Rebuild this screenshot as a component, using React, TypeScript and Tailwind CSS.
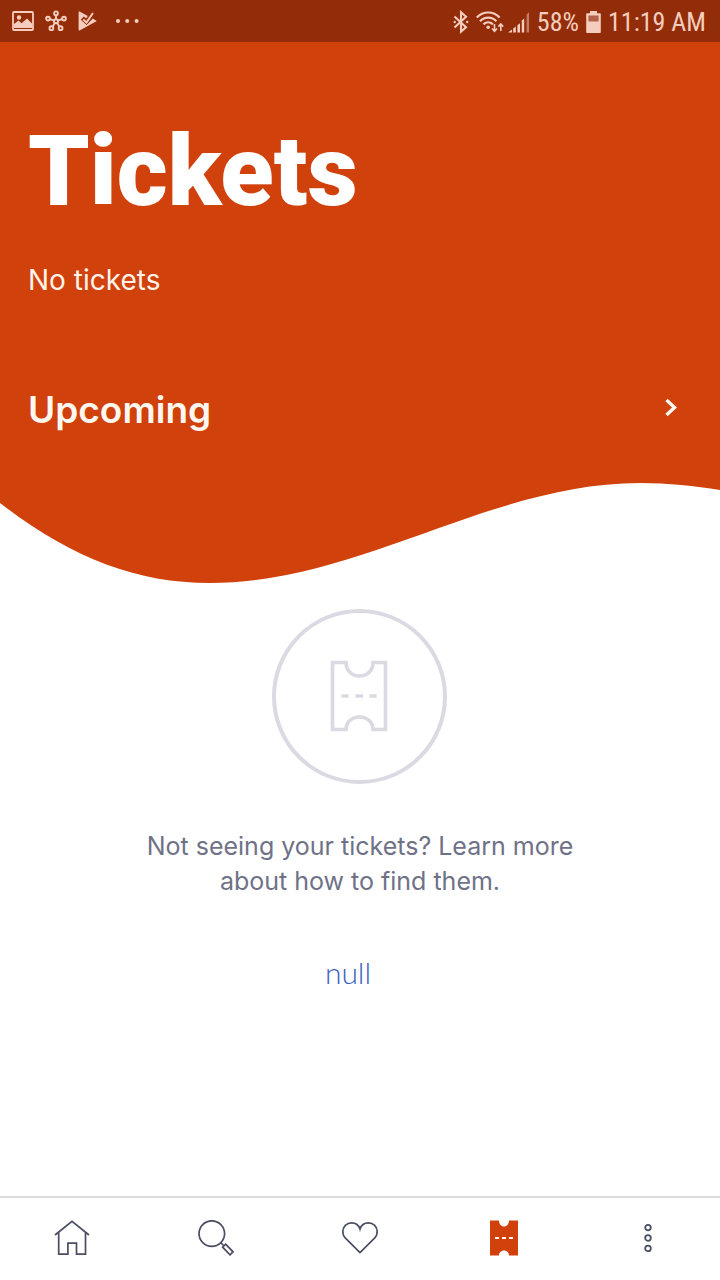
import React from "react";

function PictureIcon() {
  return (
    <svg className="h-5 w-[22px]" viewBox="0 0 22 20" fill="none">
      <rect x="1" y="1" width="20" height="18" rx="1" stroke="currentColor" strokeWidth="1.8" />
      <circle cx="7" cy="6.5" r="2.2" fill="currentColor" />
      <path d="M2 17V13l4.500-3.500 3 2.800 5.500-4.800 5 5V17z" fill="currentColor" />
    </svg>
  );
}

function HubIcon() {
  return (
    <svg className="size-[22px]" viewBox="0 0 22 22" fill="none" stroke="currentColor" strokeWidth="1.9">
      <circle cx="11" cy="11.2" r="2" />
      <path d="M11 5.4v3.8M5.2 9.2l3.9 1.4M16.8 9.2l-3.9 1.4M7.9 16.2l1.9-3.3M14.1 16.2l-1.9-3.3" />
      <circle cx="11" cy="3.3" r="1.9" />
      <circle cx="3" cy="8.6" r="1.9" />
      <circle cx="19" cy="8.6" r="1.9" />
      <circle cx="6.4" cy="18.2" r="1.9" />
      <circle cx="15.6" cy="18.2" r="1.9" />
    </svg>
  );
}

function PlayCheckIcon() {
  return (
    <svg className="h-5 w-[19px]" viewBox="0 0 19 20" fill="none">
      <path d="M.6 1.200C.6.500 1 .300 1.600.600L9.800 5 8.200 7.600 5.800 5.400 2.800 8.800 8.600 14 14.800 7.600 18 9.400C18.500 9.700 18.500 10.300 18 10.600L1.600 19.400C1 19.700.6 19.400.6 18.800z" fill="currentColor" />
      <path d="M5.200 8.400 8.500 11.400 15 2" stroke="currentColor" strokeWidth="2" />
    </svg>
  );
}

function DotsIcon() {
  return (
    <svg className="h-1 w-[23px]" viewBox="0 0 23 4" fill="currentColor">
      <circle cx="2" cy="2" r="2" />
      <circle cx="11.2" cy="2" r="2" />
      <circle cx="20.6" cy="2" r="2" />
    </svg>
  );
}

function BluetoothIcon() {
  return (
    <svg className="h-6 w-4" viewBox="0 0 16 24" fill="none" stroke="currentColor" strokeWidth="2.1">
      <path d="M1.500 6.600 13 17.200 8 21.600V2.200L13 6.800 1.500 17.400" />
      <circle cx="1.700" cy="12" r="1.200" fill="currentColor" stroke="none" />
      <circle cx="14.200" cy="12" r="1.200" fill="currentColor" stroke="none" />
    </svg>
  );
}

function WifiIcon() {
  return (
    <svg className="h-[22px] w-7" viewBox="0 0 28 22" fill="none" stroke="currentColor">
      <path d="M0.8 6.6C7-.2 17.5-.2 23.6 6.6M4 10.3c4.6-4.8 11.8-4.8 16.4 0M7.500 13.400c2.800-2.700 6.600-2.700 9.400 0" strokeWidth="2.2" />
      <circle cx="12.2" cy="16.2" r="1.8" fill="currentColor" stroke="none" />
      <path d="M18.500 13v7M16 17.500l2.500 2.700 2.500-2.700M24.800 20v-6.800M22.400 15.600l2.400-2.600 2.400 2.600" strokeWidth="1.6" />
    </svg>
  );
}

function SignalIcon() {
  return (
    <svg className="size-[22px]" viewBox="0 0 22 22" fill="currentColor">
      <path d="M0 21.500 4 18.500v3zM5.200 17.400 7.800 15.400v6.100H5.200zM9.400 14.200 12 12.200v9.300H9.400zM13.800 9.400l2.400-2v14.100h-2.400z" />
      <path d="M18.600 3.600 21 1.200v20.300h-2.400z" opacity=".5" />
    </svg>
  );
}

function BatteryIcon() {
  return (
    <svg className="h-[22px] w-[15px]" viewBox="0 0 15 22" fill="currentColor">
      <path d="M4 0h7v2.200h2.800c.6 0 1 .4 1 1V21c0 .6-.4 1-1 1H1.200c-.6 0-1-.4-1-1V3.200c0-.6.4-1 1-1H4z" />
      <path d="M2.400 4.500h10.200v6H2.400z" fill="#b2634a" />
    </svg>
  );
}

function HomeIcon() {
  return (
    <svg className="size-9" viewBox="0 0 36 36" fill="none" stroke="currentColor" strokeWidth="1.7">
      <path d="M1 15 18 1.300 35 15M4.700 12v22.200h9.200v-11h8.600v11h9V12" />
    </svg>
  );
}

function SearchIcon() {
  return (
    <svg className="size-9" viewBox="0 0 36 36" fill="none" stroke="currentColor" strokeWidth="1.7">
      <circle cx="13.800" cy="13.600" r="12.800" />
      <path d="M22.800 22.700 26 26M27.600 24.200 35 31.800 32 34.800 24.600 27.200z" />
    </svg>
  );
}

function HeartIcon() {
  return (
    <svg className="size-9" viewBox="0 0 36 36" fill="none" stroke="currentColor" strokeWidth="1.7">
      <path d="M18 32.600 3.200 17.800C1.600 16.200.8 14.300.8 11.800.8 6.600 4.600 2.800 9.600 2.800c4.400 0 7.300 2.600 8.400 6.200 1.100-3.600 4-6.200 8.400-6.200 5 0 8.800 3.800 8.800 9 0 2.500-.8 4.400-2.400 6z" />
    </svg>
  );
}

function TicketIcon() {
  return (
    <svg className="h-9 w-7" viewBox="0 0 28 36">
      <path d="M0 .5h9c0 3.300 2 6 5 6s5-2.700 5-6h9v35h-9c0-2.600-2-5-5-5s-5 2.400-5 5H0z" fill="#d1410c" />
      <path d="M5 18h4M12 18h4M19 18h4" stroke="#fff3ea" strokeWidth="2" />
    </svg>
  );
}

function MoreIcon() {
  return (
    <svg className="h-9 w-2" viewBox="0 0 8 36" fill="none" stroke="currentColor" strokeWidth="1.8">
      <circle cx="4" cy="7.600" r="2.800" />
      <circle cx="4" cy="18" r="2.800" />
      <circle cx="4" cy="28.400" r="2.800" />
    </svg>
  );
}

function EmptyTicket() {
  return (
    <svg className="size-44" viewBox="0 0 176 176" fill="none" stroke="#dbdae3">
      <circle cx="87.500" cy="88.500" r="85.500" strokeWidth="4" />
      <path d="M60.500 54.500H74c0 8 5.800 13.500 13.500 13.500S101 62.500 101 54.500h12.500v67H101c0-7.500-6-12.500-13.500-12.500S74 114 74 121.500H60.500z" strokeWidth="3.600" />
      <path d="M69.500 88h7M83.500 88h7.500M97.500 88h7" strokeWidth="3.600" />
    </svg>
  );
}

const tabs = [
  { label: "Home", icon: <HomeIcon /> },
  { label: "Search", icon: <SearchIcon /> },
  { label: "Favorites", icon: <HeartIcon /> },
  { label: "Tickets", icon: <TicketIcon /> },
  { label: "More", icon: <MoreIcon /> },
];

export default function App() {
  return (
    <div className="flex min-h-screen flex-col bg-white font-['Inter',sans-serif]">
      <div className="flex h-[42px] items-center justify-between bg-[#932d09] pr-[14px] pl-3 text-[#f5cdbf]">
        <div className="flex items-center gap-[11px]">
          <PictureIcon />
          <HubIcon />
          <PlayCheckIcon />
          <span className="pl-2">
            <DotsIcon />
          </span>
        </div>
        <div className="flex items-center gap-[7px] pt-px font-['Roboto_Condensed','Roboto',sans-serif] text-[26px] leading-9 whitespace-nowrap">
          <BluetoothIcon />
          <div className="flex items-center gap-1">
            <WifiIcon />
            <SignalIcon />
          </div>
          <span>58%</span>
          <BatteryIcon />
          <span>11:19 AM</span>
        </div>
      </div>

      <header className="bg-[#d1410c] px-7 pt-[74px] text-white">
        <h1 className="font-['Roboto',sans-serif] text-[98px] leading-[112px] font-black">Tickets</h1>
        <p className="mt-[34px] text-[28px] leading-9 text-[#fff3ea]">No tickets</p>
        <button type="button" className="mt-[88px] flex w-full items-center justify-between text-left">
          <span className="text-[37px] leading-12 font-semibold text-[#fff8f0]">Upcoming</span>
          <svg className="mr-[15px] h-6 w-3" viewBox="0 0 12 24" fill="none" stroke="#fff8f0" strokeWidth="3.400">
            <path d="M1.500 2 9.500 9.500 1.500 17" />
          </svg>
        </button>
        <div className="h-12" />
      </header>
      <svg className="-mt-0.5 h-[104px] w-full shrink-0" viewBox="0 480 720 104" preserveAspectRatio="none" fill="#d1410c">
        <path d="M0 480V503C70 557 135 583 210 583C360 583 490 483 640 483C668 483 695 486 720 490V480Z" />
      </svg>

      <main className="flex grow flex-col items-center pt-6">
        <EmptyTicket />
        <p className="mt-[45px] max-w-[440px] text-center text-[25px] leading-[35px] text-[#6f7287]">
          Not seeing your tickets? Learn more about how to find them.
        </p>
        <a href="#help" className="mt-[53px] mr-6 font-['Lato',sans-serif] text-[30px] leading-10 font-light text-[#3d5fc4]">
          null
        </a>
      </main>

      <nav className="grid h-[84px] grid-cols-5 border-t-2 border-[#dbdbdb] pb-0.5 text-[#4b4d63]">
        {tabs.map((tab) => (
          <button key={tab.label} type="button" aria-label={tab.label} className="flex items-center justify-center">
            {tab.icon}
          </button>
        ))}
      </nav>
    </div>
  );
}
